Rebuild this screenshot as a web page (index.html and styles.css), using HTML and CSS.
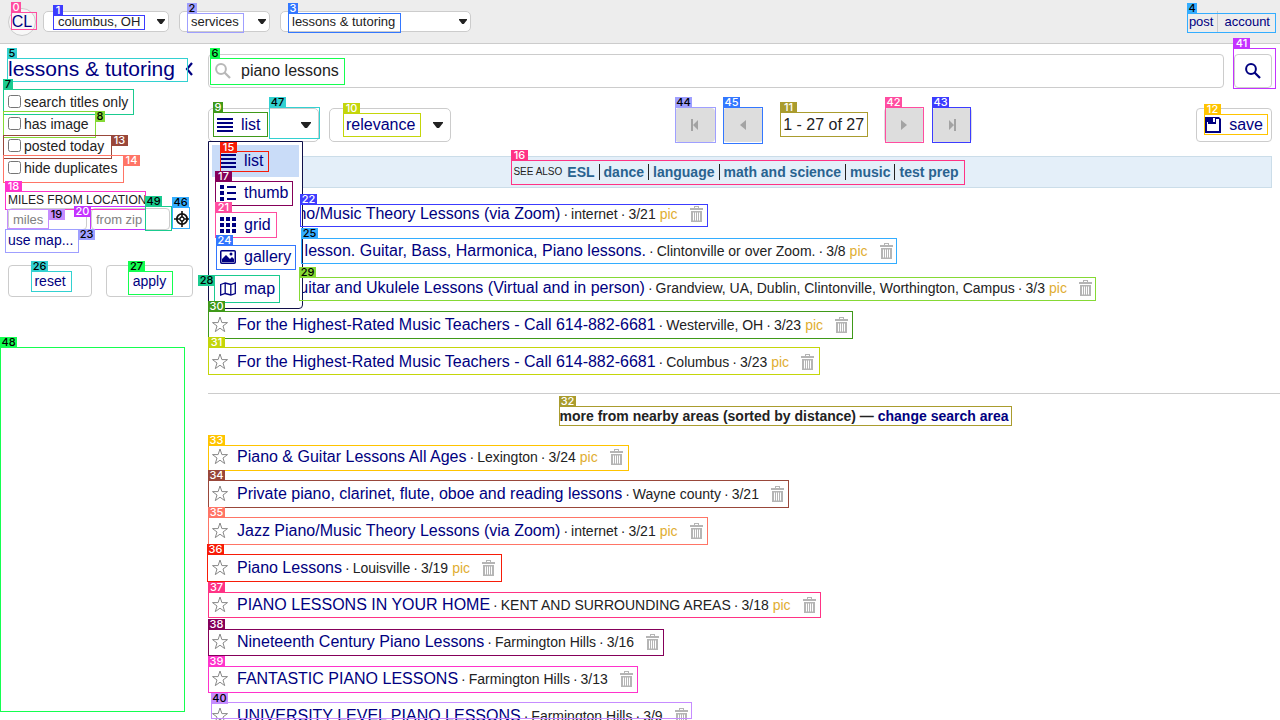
FILE: index.html
```html
<!DOCTYPE html>
<html lang="en">
<head>
<meta charset="utf-8">
<title>lessons &amp; tutoring - piano lessons</title>
<link rel="stylesheet" href="styles.css">
</head>
<body>
<svg class="defs" aria-hidden="true">
  <symbol id="i-caret" viewBox="0 0 10 6"><path d="M0 0h10v1L6 6H4L0 1z"/></symbol>
  <symbol id="i-list" viewBox="0 0 16 14"><path d="M0 0h16v2H0zM0 4h16v2H0zM0 8h16v2H0zM0 12h16v2H0z"/></symbol>
  <symbol id="i-thumb" viewBox="0 0 16 16"><path d="M0 0h4v4H0zM0 6h4v4H0zM0 12h4v4H0zM7 1h9v2H7zM7 7h9v2H7zM7 13h9v2H7z"/></symbol>
  <symbol id="i-grid" viewBox="0 0 16 16"><path d="M0 0h4v4H0zM6 0h4v4H6zM12 0h4v4h-4zM0 6h4v4H0zM6 6h4v4H6zM12 6h4v4h-4zM0 12h4v4H0zM6 12h4v4H6zM12 12h4v4h-4z"/></symbol>
  <symbol id="i-gallery" viewBox="0 0 16 16"><rect x=".75" y="1.75" width="14.5" height="12.5" rx="1" fill="none" stroke="currentColor" stroke-width="1.5"/><path d="M2 13V10l4-4 4 4 2-2 2 2v3z"/><circle cx="11" cy="5" r="1.5"/></symbol>
  <symbol id="i-map" viewBox="0 0 16 16"><path d="M.7 3.5 5.2 2l5.6 1.5L15.3 2v10.500L10.800 14 5.200 12.500.700 14zM5.200 2v10.500M10.800 3.500V14" fill="none" stroke="currentColor" stroke-width="1.300"/></symbol>
  <symbol id="i-search" viewBox="0 0 16 16"><circle cx="6" cy="6" r="4.900" fill="none" stroke="currentColor" stroke-width="2"/><path d="m9.500 9.500 5.500 5.500" stroke="currentColor" stroke-width="2.300"/></symbol>
  <symbol id="i-save" viewBox="0 0 16 16"><path d="M0 0h14l2 2v14H0zM2 7v7h12V7z M8 1v4h2V1z" fill-rule="evenodd"/><path d="M2 5h1v3H2zM11 2h3v6h-3z" fill="#fff"/></symbol>
  <symbol id="i-target" viewBox="0 0 16 16"><g fill="none" stroke="currentColor"><circle cx="8" cy="8" r="5.200" stroke-width="1.800"/><circle cx="8" cy="8" r="2" stroke-width="1.300"/><path d="M8 0v6M8 10v6M0 8h6M10 8h6" stroke-width="1.600"/></g></symbol>
  <symbol id="i-star" viewBox="0 0 16 16"><path d="m8 0 1.900 5.600h5.600l-4.500 3.400 1.700 5.600L8 11.200l-4.700 3.400 1.700-5.600L.5 5.600h5.600z" fill="none" stroke="currentColor"/></symbol>
  <symbol id="i-trash" viewBox="0 0 13 16"><path d="M0 2h4V0h5v2h4v2H0zM5 1v1h3V1zM1 5h11v11H1zM3 6.500v8h1v-8zM5 6.500v8h1v-8zM7 6.500v8h1v-8zM9 6.500v8h1v-8z" fill-rule="evenodd"/></symbol>
  <symbol id="i-prev" viewBox="0 0 10 14"><path d="M8 2v10L2 7z"/></symbol>
  <symbol id="i-next" viewBox="0 0 10 14"><path d="M2 2v10l6-5z"/></symbol>
  <symbol id="i-first" viewBox="0 0 10 14"><path d="M1 1h2v12H1zM8 2v10L3 7z"/></symbol>
  <symbol id="i-last" viewBox="0 0 10 14"><path d="M7 1h2v12H7zM2 2v10l5-5z"/></symbol>
</svg>

<header class="topbar">
  <a class="logo" href="#">CL</a>
  <span class="picker picker-area"><select aria-label="area"><option>columbus, OH</option></select><svg class="caret"><use href="#i-caret"/></svg></span>
  <span class="picker picker-section"><select aria-label="section"><option>services</option></select><svg class="caret"><use href="#i-caret"/></svg></span>
  <span class="picker picker-category"><select aria-label="category"><option>lessons &amp; tutoring</option></select><svg class="caret"><use href="#i-caret"/></svg></span>
  <nav class="account"><a href="#">post</a><a href="#">account</a></nav>
</header>

<div class="page">
  <aside class="sidebar">
    <div class="heading"><h1>lessons &amp; tutoring</h1><button class="collapse" aria-label="collapse"><svg viewBox="0 0 8 14"><path d="M7 1 2 7l5 6" fill="none" stroke="currentColor" stroke-width="2.200"/></svg></button></div>
    <div class="filters">
      <label><input type="checkbox">search titles only</label>
      <label><input type="checkbox">has image</label>
      <label><input type="checkbox">posted today</label>
      <label><input type="checkbox">hide duplicates</label>
    </div>
    <div class="legend">MILES FROM LOCATION</div>
    <div class="distance">
      <input type="text" placeholder="miles" aria-label="miles">
      <input type="text" placeholder="from zip" aria-label="from zip">
      <button class="locate" aria-label="use my location"><svg><use href="#i-target"/></svg></button>
    </div>
    <a class="usemap" href="#">use map...</a>
    <div class="actions"><button>reset</button><button>apply</button></div>
  </aside>

  <main class="content">
    <form class="search">
      <div class="searchbox"><svg><use href="#i-search"/></svg><input type="text" value="piano lessons" aria-label="search"></div>
      <button type="button" class="go" aria-label="search"><svg><use href="#i-search"/></svg></button>
    </form>
    <div class="toolbar">
      <div class="modes">
        <div class="mode">
          <button class="mode-button"><svg class="icon-list"><use href="#i-list"/></svg><span>list</span><svg class="caret"><use href="#i-caret"/></svg></button>
          <div class="menu">
            <button class="selected"><svg><use href="#i-list"/></svg>list</button>
            <button><svg><use href="#i-thumb"/></svg>thumb</button>
            <button><svg><use href="#i-grid"/></svg>grid</button>
            <button><svg><use href="#i-gallery"/></svg>gallery</button>
            <button><svg><use href="#i-map"/></svg>map</button>
          </div>
        </div>
        <span class="picker picker-sort"><select aria-label="sort"><option>relevance</option></select><svg class="caret"><use href="#i-caret"/></svg></span>
      </div>
      <div class="paging">
        <button disabled aria-label="first"><svg><use href="#i-first"/></svg></button>
        <button disabled aria-label="previous"><svg><use href="#i-prev"/></svg></button>
        <span class="range">1 - 27 of 27</span>
        <button disabled aria-label="next"><svg><use href="#i-next"/></svg></button>
        <button disabled aria-label="last"><svg><use href="#i-last"/></svg></button>
      </div>
      <button class="save"><svg><use href="#i-save"/></svg>save</button>
    </div>
    <nav class="seealso"><span>SEE ALSO</span><a href="#">ESL</a><a href="#">dance</a><a href="#">language</a><a href="#">math and science</a><a href="#">music</a><a href="#">test prep</a></nav>
    <ul class="results" id="local"></ul>
    <p class="nearby">more from nearby areas (sorted by distance) — <a href="#">change search area</a></p>
    <ul class="results" id="nearby"></ul>
  </main>
</div>
<div class="marks" id="marks"></div>
<script src="page.js"></script>
</body>
</html>
```
FILE: styles.css
```css
* { box-sizing: border-box; }
body {
  margin: 0;
  height: 100vh;
  overflow: hidden;
  position: relative;
  background: #fff;
  color: #222;
  font: 16px/20px "Liberation Sans", Arial, sans-serif;
}
a { color: #000080; text-decoration: none; }
svg { fill: currentColor; flex: none; display: block; }
button, select, input { font: inherit; color: inherit; }
button { padding: 0; border: 0; background: none; color: #000080; }
.defs { position: absolute; width: 0; height: 0; }

.topbar {
  display: flex;
  align-items: center;
  gap: 10px;
  height: 44px;
  padding: 0 8px;
  background: #ededed;
  border-bottom: 1px solid #ccc;
  font-size: 13px;
}
.logo {
  width: 28px;
  height: 28px;
  margin-right: -3px;
  border: 1px solid #ccc;
  border-radius: 50%;
  background: #f8f8f8;
  font-size: 16px;
  line-height: 26px;
  text-align: center;
}
.picker { display: flex; position: relative; height: 21px; }
.picker select {
  width: 100%;
  appearance: none;
  padding: 0 11px;
  border: 1px solid #ccc;
  border-radius: 5px;
  background: #fff;
}
.caret {
  position: absolute;
  right: 4px;
  top: 50%;
  width: 8px;
  height: 5px;
  margin-top: -3px;
  color: #222;
  pointer-events: none;
}
.picker-area { width: 126px; }
.picker-area select { padding-left: 14px; }
.picker-section { width: 91px; }
.picker-category { width: 191px; }
.account { display: flex; align-items: center; margin-left: auto; }
.account a { padding: 0 2px 0 6px; line-height: 22px; }
.account a + a { margin-left: 2px; border-left: 1px solid #ccc; }

.page { display: flex; }
.sidebar {
  flex: none;
  width: 208px;
  padding: 13px 15px 0 8px;
  font-size: 14px;
}
.heading { display: flex; align-items: center; gap: 10px; }
.heading h1 { margin: 0; color: #000080; font-size: 21px; font-weight: 400; line-height: 24px; white-space: nowrap; }
.collapse svg { width: 8px; height: 14px; }
.filters { margin-top: 10px; }
.filters label { display: flex; align-items: center; gap: 3px; height: 22px; }
.filters input { width: 13px; height: 13px; margin: 0 0 2px; }
.legend { margin-top: 13px; font-size: 12px; line-height: 16px; }
.distance { display: flex; align-items: center; gap: 4px; }
.distance input { width: 79px; height: 22px; padding: 0 4px; border: 1px solid #ccc; border-radius: 4px; font-size: 13px; }
.distance input::placeholder { color: #808080; }
.locate svg { width: 16px; height: 16px; color: #111; }
.usemap { display: block; }
.actions { display: grid; grid-template-columns: 84px 87px; gap: 14px; margin-top: 15px; }
.actions button { height: 32px; border: 1px solid #ccc; border-radius: 4px; background: #fff; }

.content { flex: 1; min-width: 0; padding-top: 10px; }
.search, .toolbar { display: flex; margin-right: 8px; }
.search { gap: 10px; }
.searchbox {
  flex: 1;
  display: flex;
  align-items: center;
  gap: 10px;
  height: 34px;
  padding: 0 6px;
  border: 1px solid #ccc;
  border-radius: 4px;
}
.searchbox svg { width: 16px; height: 16px; color: #b8b8b8; }
.searchbox input { flex: 1; min-width: 0; padding: 0; border: 0; outline: 0; background: none; }
.go { display: grid; place-items: center; width: 38px; border: 1px solid #ccc; border-radius: 4px; }
.go svg { width: 16px; height: 16px; }

.toolbar { justify-content: space-between; align-items: center; height: 34px; margin-top: 20px; }
.modes { display: flex; gap: 10px; }
.mode { position: relative; }
.mode-button {
  display: flex;
  align-items: center;
  gap: 8px;
  width: 111px;
  height: 34px;
  padding-left: 8px;
  border: 1px solid #ccc;
  border-radius: 5px;
  background: #fff;
}
.mode-button svg:first-child { width: 16px; height: 14px; }
.mode-button .caret, .picker-sort .caret { right: 8px; width: 10px; height: 6px; }
.picker-sort { width: 122px; height: 34px; }
.picker-sort select { padding-left: 16px; color: #000080; }
.menu {
  position: absolute;
  z-index: 1;
  top: 33px;
  left: 0;
  width: 95px;
  padding: 3px;
  border: 1px solid #10104a;
  border-radius: 0 0 4px 0;
  background: #fff;
}
.menu button { display: flex; align-items: center; gap: 8px; width: 100%; height: 32px; padding-left: 8px; }
.menu .selected { background: #c9dcf8; }
.menu svg { width: 16px; height: 16px; }
.paging { display: flex; align-items: center; gap: 8px; }
.paging button { display: grid; place-items: center; width: 40px; height: 34px; border-radius: 4px; background: #ddd; color: #a3a3a3; }
.paging svg { width: 10px; height: 14px; }
.range { padding: 0 12px; }
.save { display: flex; align-items: center; gap: 8px; height: 34px; padding: 0 8px; border: 1px solid #ccc; border-radius: 4px; }
.save svg { width: 16px; height: 16px; }

.seealso {
  display: flex;
  align-items: center;
  justify-content: center;
  height: 32px;
  margin: 14px 8px 7px 0;
  padding-right: 4px;
  border: 1px solid #cbdde9;
  background: #e4eff9;
  font-size: 14px;
  line-height: 16px;
  font-weight: 700;
}
.seealso span { margin-right: 1px; font-size: 10px; font-weight: 400; color: #222; }
.seealso a { padding: 0 4px; color: #296390; }
.seealso a + a { border-left: 1px solid #222; }

.results { margin: 0; padding: 0 0 0 4px; list-style: none; }
.results li { display: flex; align-items: center; height: 37px; white-space: nowrap; }
.results .star { margin-right: 9px; color: #888; }
.results .star svg { width: 16px; height: 16px; }
.results .meta { display: flex; gap: 3px; margin-left: 3px; padding-top: 1px; font-size: 14px; }
.results .pic { margin-left: 1px; color: #dfae32; }
.results .hide { margin-left: 12px; color: #b5b5b5; }
.results .hide svg { width: 13px; height: 16px; }
.nearby {
  margin: 13px 0 0;
  padding: 12px 8px 12px 88px;
  border-top: 1px solid #ccc;
  font-size: 14px;
  font-weight: 700;
  text-align: center;
}

.marks { position: absolute; z-index: 2; inset: 0; pointer-events: none; }
.mark { position: absolute; border: 1px solid; }
.tag {
  position: absolute;
  height: 11px;
  font: 500 11px/11px Inter, sans-serif;
  text-align: center;
}
.tag.one { width: 10px; }
.tag.two { width: 17px; }
.tag.light { color: #fff; }
.tag.dark { color: #000; }
```
FILE: page.js
```js
const results = {
  local: [
    ['Jazz Piano/Music Theory Lessons (via Zoom)', 'internet', '3/21', true],
    ['Free trial lesson. Guitar, Bass, Harmonica, Piano lessons.', 'Clintonville or over Zoom.', '3/8', true],
    ['Piano, Guitar and Ukulele Lessons (Virtual and in person)', 'Grandview, UA, Dublin, Clintonville, Worthington, Campus', '3/3', true],
    ['For the Highest-Rated Music Teachers - Call 614-882-6681', 'Westerville, OH', '3/23', true],
    ['For the Highest-Rated Music Teachers - Call 614-882-6681', 'Columbus', '3/23', true]
  ],
  nearby: [
    ['Piano & Guitar Lessons All Ages', 'Lexington', '3/24', true],
    ['Private piano, clarinet, flute, oboe and reading lessons', 'Wayne county', '3/21', false],
    ['Jazz Piano/Music Theory Lessons (via Zoom)', 'internet', '3/21', true],
    ['Piano Lessons', 'Louisville', '3/19', true],
    ['PIANO LESSONS IN YOUR HOME', 'KENT AND SURROUNDING AREAS', '3/18', true],
    ['Nineteenth Century Piano Lessons', 'Farmington Hills', '3/16', false],
    ['FANTASTIC PIANO LESSONS', 'Farmington Hills', '3/13', false],
    ['UNIVERSITY LEVEL PIANO LESSONS', 'Farmington Hills', '3/9', false]
  ]
};
for (const id in results) {
  document.getElementById(id).innerHTML = results[id].map(([title, place, date, pic]) =>
    `<li><button class="star" aria-label="favorite"><svg><use href="#i-star"/></svg></button>` +
    `<a href="#">${title.replace('&', '&amp;')}</a>` +
    `<span class="meta"><span>·</span><span>${place}</span><span>·</span><span>${date}</span>${pic ? '<span class="pic">pic</span>' : ''}</span>` +
    `<button class="hide" aria-label="hide"><svg><use href="#i-trash"/></svg></button></li>`).join('');
}

// number, box x, y, width, height, colour, tag x, tag y, dark digits
const marks = [
  [0, 11, 12, 26, 18, '#ff4da0', 11, 2, 0],
  [1, 53, 15, 92, 15, '#3c3cff', 53, 5, 0],
  [2, 187, 13, 57, 20, '#9f9fff', 187, 3, 1],
  [3, 288, 13, 113, 20, '#3377ff', 288, 3, 0],
  [4, 1187, 13, 89, 20, '#33adff', 1187, 3, 1],
  [5, 7, 58, 181, 24, '#33d1d1', 7, 48, 1],
  [6, 210, 58, 135, 27, '#14ff50', 210, 48, 1],
  [7, 3, 89, 131, 26, '#1acb8f', 3, 79, 1],
  [8, 3, 111, 93, 27, '#85d935', 95, 111, 1],
  [9, 213, 112, 55, 25, '#3f9919', 213, 102, 0],
  [10, 343, 113, 78, 24, '#c4d60a', 343, 103, 0],
  [11, 780, 112, 88, 25, '#aa9c2e', 780, 102, 0],
  [12, 1204, 114, 64, 21, '#ffc400', 1204, 104, 0],
  [13, 3, 135, 109, 24, '#99473a', 111, 135, 0],
  [14, 3, 155, 121, 28, '#ff7566', 123, 155, 0],
  [15, 220, 151, 49, 21, '#f71c08', 220, 142, 0],
  [16, 511, 160, 454, 25, '#ff3385', 511, 150, 0],
  [17, 215, 181, 78, 25, '#85005a', 215, 171, 0],
  [18, 5, 191, 141, 19, '#ff33cc', 5, 181, 0],
  [19, 7, 209, 42, 20, '#c68cff', 48, 209, 1],
  [20, 90, 206, 56, 24, '#c433ff', 74, 206, 0],
  [21, 215, 212, 62, 26, '#ff4da0', 215, 202, 0],
  [22, 300, 204, 408, 23, '#3c3cff', 300, 194, 0],
  [23, 5, 229, 74, 24, '#9f9fff', 78, 229, 1],
  [24, 216, 245, 80, 25, '#3377ff', 216, 235, 0],
  [25, 301, 238, 596, 26, '#33adff', 301, 228, 1],
  [26, 31, 271, 41, 21, '#33d1d1', 31, 261, 1],
  [27, 128, 271, 45, 24, '#14ff50', 128, 261, 1],
  [28, 214, 275, 66, 28, '#1acb8f', 198, 275, 1],
  [29, 299, 277, 797, 24, '#85d935', 299, 267, 1],
  [30, 208, 311, 645, 28, '#3f9919', 208, 301, 0],
  [31, 208, 347, 612, 28, '#c4d60a', 208, 337, 0],
  [32, 559, 406, 453, 20, '#aa9c2e', 559, 396, 0],
  [33, 208, 445, 421, 26, '#ffc400', 208, 435, 0],
  [34, 208, 480, 581, 28, '#99473a', 208, 470, 0],
  [35, 208, 517, 500, 28, '#ff7566', 208, 507, 0],
  [36, 207, 554, 295, 28, '#f71c08', 207, 544, 0],
  [37, 208, 592, 613, 26, '#ff3385', 208, 582, 0],
  [38, 208, 629, 456, 27, '#85005a', 208, 619, 0],
  [39, 208, 666, 430, 27, '#ff33cc', 208, 656, 0],
  [40, 211, 702, 481, 17, '#c68cff', 211, 693, 1],
  [41, 1233, 48, 43, 41, '#c433ff', 1233, 38, 0],
  [42, 885, 107, 39, 36, '#ff4da0', 885, 97, 0],
  [43, 932, 107, 39, 36, '#3c3cff', 932, 97, 0],
  [44, 675, 107, 41, 36, '#9f9fff', 675, 97, 1],
  [45, 723, 107, 40, 37, '#3377ff', 723, 97, 0],
  [46, 172, 207, 18, 22, '#33adff', 172, 197, 1],
  [47, 269, 107, 51, 32, '#33d1d1', 269, 97, 1],
  [48, 0, 347, 185, 365, '#14ff50', 0, 337, 1],
  [49, 145, 206, 27, 25, '#1acb8f', 145, 196, 1]
];
document.getElementById('marks').innerHTML = marks.map(([n, x, y, w, h, color, tx, ty, dark]) =>
  `<div class="mark" style="left:${x}px;top:${y}px;width:${w}px;height:${h}px;border-color:${color}"></div>` +
  `<div class="tag ${n < 10 ? 'one' : 'two'} ${dark ? 'dark' : 'light'}" style="left:${tx}px;top:${ty}px;background:${color}">${n}</div>`).join('');
```
